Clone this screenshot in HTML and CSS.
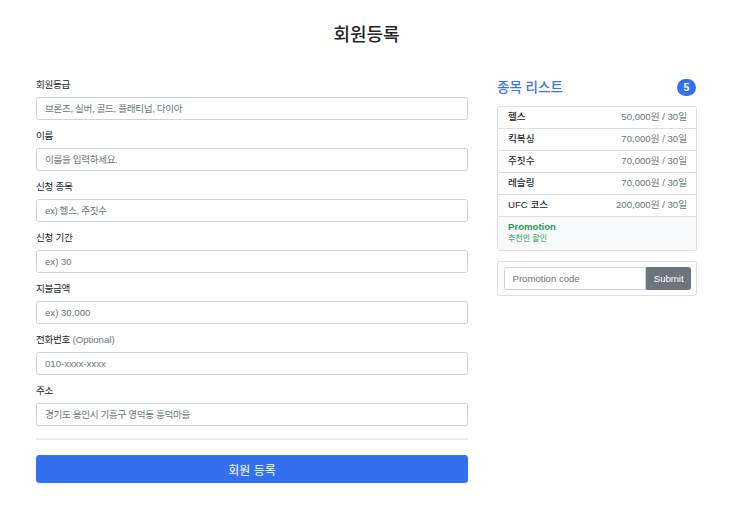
FILE: index.html
```html
<!DOCTYPE html>
<html lang="ko">
<head>
  <meta charset="UTF-8" />
  <meta name="viewport" content="width=device-width, initial-scale=1.0" />
  <title>회원등록</title>
  <link rel="stylesheet" href="styles.css">
</head>
<body>
  <div class="container">
    <div class="page-header">
      <h2>회원등록</h2>
    </div>

    <div class="row">
      <form class="member-form">
        <div class="field">
          <label for="grade">회원등급</label>
          <input type="text" id="grade" class="ko" placeholder="브론즈, 실버, 골드, 플래티넘, 다이아" />
        </div>
        <div class="field">
          <label for="name">이름</label>
          <input type="text" id="name" class="ko" placeholder="이름을 입력하세요." />
        </div>
        <div class="field">
          <label for="sport">신청 종목</label>
          <input type="text" id="sport" class="ko" placeholder="ex) 헬스, 주짓수" />
        </div>
        <div class="field">
          <label for="period">신청 기간</label>
          <input type="text" id="period" placeholder="ex) 30" />
        </div>
        <div class="field">
          <label for="amount">지불금액</label>
          <input type="text" id="amount" placeholder="ex) 30,000" />
        </div>
        <div class="field">
          <label for="phone">전화번호 <span class="muted latin">(Optional)</span></label>
          <input type="text" id="phone" placeholder="010-xxxx-xxxx" />
        </div>
        <div class="field">
          <label for="address">주소</label>
          <input type="text" id="address" class="ko" placeholder="경기도 용인시 기흥구 영덕동 흥덕마을" />
        </div>

        <hr class="divider" />

        <button type="submit" class="btn-primary">회원 등록</button>
      </form>

      <aside class="sidebar">
        <div class="sidebar-title">
          <h4>종목 리스트</h4>
          <span class="badge">5</span>
        </div>

        <ul class="list-group">
          <li class="list-item"><span class="item-name">헬스</span><span class="muted">50,000원 / 30일</span></li>
          <li class="list-item"><span class="item-name">킥복싱</span><span class="muted">70,000원 / 30일</span></li>
          <li class="list-item"><span class="item-name">주짓수</span><span class="muted">70,000원 / 30일</span></li>
          <li class="list-item"><span class="item-name">레슬링</span><span class="muted">70,000원 / 30일</span></li>
          <li class="list-item"><span class="item-name">UFC 코스</span><span class="muted">200,000원 / 30일</span></li>
          <li class="list-item promo">
            <div>
              <div class="promo-title">Promotion</div>
              <small>추천인 할인</small>
            </div>
          </li>
        </ul>

        <div class="promo-card">
          <div class="input-group">
            <input type="text" placeholder="Promotion code" />
            <button type="button" class="btn-secondary">Submit</button>
          </div>
        </div>
      </aside>
    </div>
  </div>
</body>
</html>
```

FILE: styles.css
```css
* {
  box-sizing: border-box;
}

body {
  margin: 0;
  font-family: 'Liberation Sans', 'Noto Sans CJK KR', sans-serif;
  font-size: 9.6px;
  line-height: 1.5;
  color: #212529;
  background: #fff;
}

.container {
  width: 661px;
  margin-left: 36px;
}

.page-header {
  height: 78px;
  padding-top: 21px;
  text-align: center;
}

.page-header h2 {
  margin: 0;
  font-family: 'Noto Sans CJK KR', sans-serif;
  font-size: 18px;
  font-weight: 500;
  line-height: 24px;
}

.row {
  display: grid;
  grid-template-columns: 432px 200px;
  column-gap: 29px;
  align-items: start;
}

/* form */

.field {
  margin-bottom: 9px;
}

label {
  display: block;
  height: 14px;
  margin-bottom: 5px;
  line-height: 14px;
  letter-spacing: -0.3px;
}

.latin {
  letter-spacing: 0;
}

.muted {
  color: #6c757d;
}

input {
  display: block;
  width: 100%;
  height: 23px;
  padding: 0 8px;
  font-family: inherit;
  font-size: 9.6px;
  color: #212529;
  background: #fff;
  border: 1px solid #ced4da;
  border-radius: 2.4px;
}

input.ko {
  letter-spacing: -0.35px;
}

input::placeholder {
  color: #6c757d;
}

.divider {
  margin: 12px 0 15px;
  border: 0;
  border-top: 2px solid #ececec;
}

.btn-primary {
  display: block;
  width: 100%;
  height: 28px;
  font-family: inherit;
  font-size: 12px;
  color: #fff;
  background: #3370f0;
  border: 1px solid #3370f0;
  border-radius: 3px;
  cursor: pointer;
}

/* sidebar */

.sidebar-title {
  display: flex;
  justify-content: space-between;
  align-items: center;
  height: 18px;
  margin-bottom: 10px;
}

.sidebar-title h4 {
  margin: 0;
  font-size: 13.5px;
  font-weight: 500;
  line-height: 17px;
  color: #3a76ee;
}

.badge {
  display: inline-block;
  min-width: 19px;
  height: 17px;
  margin-right: 1px;
  padding: 0 5px;
  font-size: 10.5px;
  font-weight: bold;
  line-height: 17px;
  text-align: center;
  color: #fff;
  background: #3370f0;
  border-radius: 9px;
}

.list-group {
  margin: 0 0 10px;
  padding: 0;
  list-style: none;
  border: 1px solid #dfdfdf;
  border-radius: 2.4px;
}

.list-item {
  display: flex;
  justify-content: space-between;
  align-items: center;
  height: 22px;
  padding: 0 9px 0 10px;
  border-bottom: 1px solid #dfdfdf;
}

.list-item:last-child {
  border-bottom: 0;
}

.item-name {
  font-weight: 500;
}

.list-item.promo {
  height: 33px;
  align-items: flex-start;
  padding-top: 4px;
  background: #f8f9fa;
  color: #2a9955;
}

.promo-title {
  font-weight: bold;
  line-height: 12px;
}

.promo small {
  display: block;
  font-size: 8px;
  line-height: 12px;
}

.promo-card {
  padding: 4.8px 4.8px 4.8px 5.5px;
  border: 1px solid #dfdfdf;
  border-radius: 2.4px;
}

.input-group {
  display: flex;
}

.input-group input {
  flex: 1;
  min-width: 0;
  border-radius: 2.4px 0 0 2.4px;
}

.btn-secondary {
  width: 45px;
  height: 23px;
  padding: 0;
  font-family: inherit;
  font-size: 9.6px;
  color: #fff;
  background: #6c757d;
  border: 1px solid #6c757d;
  border-radius: 0 2.4px 2.4px 0;
  cursor: pointer;
}
```
